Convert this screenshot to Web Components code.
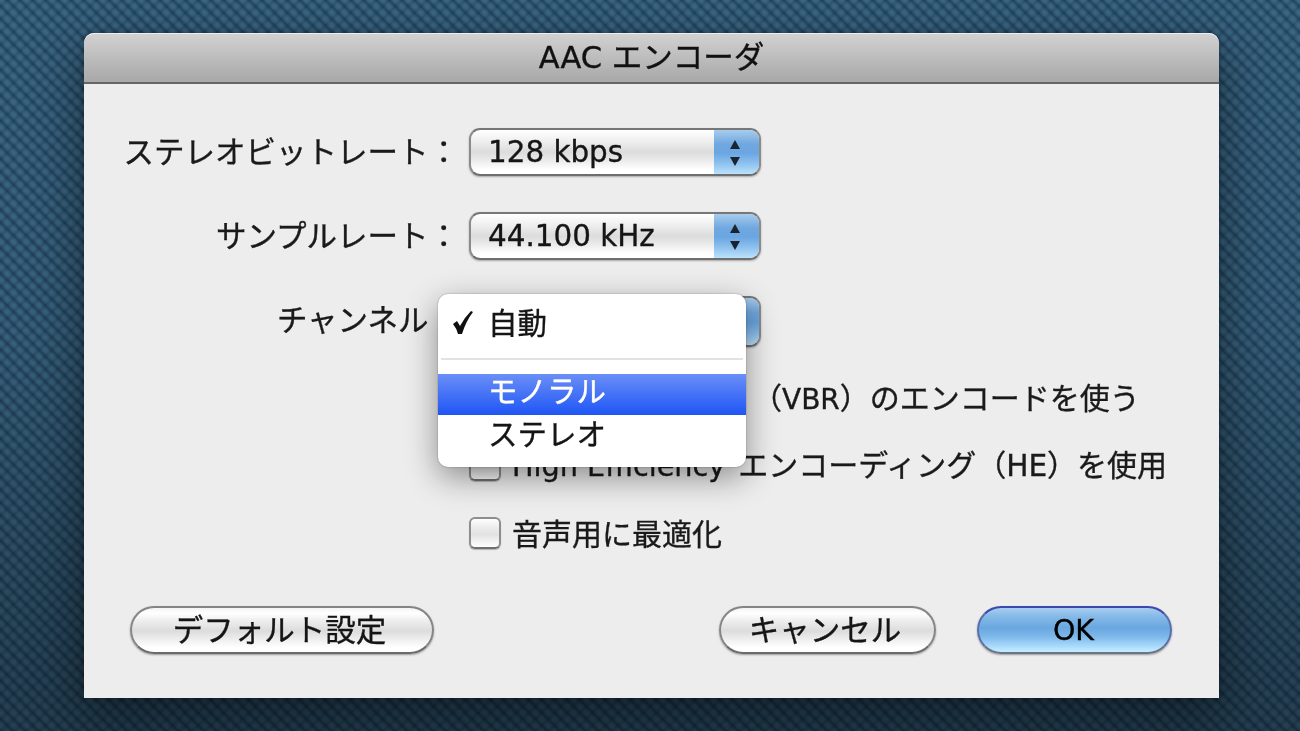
<!DOCTYPE html>
<html lang="ja"><head><meta charset="utf-8"><title>AAC エンコーダ</title>
<style>
html,body{margin:0;padding:0;height:100%;overflow:hidden}
body{font-family:"DejaVu Sans","Noto Sans CJK JP",sans-serif;color:#111}
</style></head><body>
<x-desktop>
 <x-dialog heading="AAC エンコーダ">
  <x-row label="ステレオビットレート："><x-select>128 kbps</x-select></x-row>
  <x-row label="サンプルレート："><x-select>44.100 kHz</x-select></x-row>
  <x-row label="チャンネル：" last>
    <x-select style="height:51px"></x-select>
    <x-menu>
      <x-menu-item checked>自動</x-menu-item>
      <x-menu-sep></x-menu-sep>
      <x-menu-item active>モノラル</x-menu-item>
      <x-menu-item short>ステレオ</x-menu-item>
    </x-menu>
  </x-row>
  <x-check style="margin-top:36px"><x-covered>可変ビットレート</x-covered>（<x-latin size="28">VBR</x-latin>）のエンコードを使う</x-check>
  <x-check style="margin-top:34px"><x-latin size="28.7">High Efficiency</x-latin><x-latin size="28.7" style="display:inline-block;width:13px"></x-latin>エンコーディング（<x-latin size="29.6">HE</x-latin>）を使用</x-check>
  <x-check style="margin-top:36px">音声用に最適化</x-check>
  <x-button slot="footer">デフォルト設定</x-button>
  <x-button slot="footer" style="width:217px;margin-left:auto">キャンセル</x-button>
  <x-button slot="footer" primary style="width:195px;margin-left:41px">OK</x-button>
 </x-dialog>
</x-desktop>
<script>
function def(name, css, html, extra){
  customElements.define(name, class extends HTMLElement{
    constructor(){super();const r=this.attachShadow({mode:'open'});
      r.innerHTML='<style>'+css+'</style>'+html;}
    connectedCallback(){ if(extra) extra.call(this,this.shadowRoot); }
  });
}
def('x-desktop',`
:host{display:block;box-sizing:border-box;width:1300px;height:731px;padding:33px 81px 33px 84px;position:relative;overflow:hidden;
 background-color:#3d6a88;
 background-image:
  linear-gradient(rgba(0,0,0,0) 0,rgba(0,0,0,.06) 45%,rgba(0,0,0,.3) 85%,rgba(0,0,0,.38) 100%),
  repeating-linear-gradient(45deg,rgba(10,32,52,.46) 0,rgba(10,32,52,.1) 2.5px,rgba(10,32,52,0) 4.5px,rgba(10,32,52,.1) 6.5px,rgba(10,32,52,.46) 9px),
  repeating-linear-gradient(-45deg,rgba(10,32,52,.24) 0,rgba(10,32,52,.05) 2.5px,rgba(10,32,52,0) 4.5px,rgba(10,32,52,.05) 6.5px,rgba(10,32,52,.24) 9px);}
`,`<slot></slot>`);
def('x-dialog',`
:host{display:flex;flex-direction:column;height:665px;border-radius:10px 10px 0 0;background:#ededed;
 box-shadow:0 18px 50px 4px rgba(0,0,0,.42),0 0 6px rgba(0,0,0,.3);-webkit-text-stroke-width:.35px}
.inner{flex:1;display:flex;flex-direction:column;filter:blur(.6px)}
header{height:48px;flex:none;border-radius:10px 10px 0 0;border-top:1px solid #eee;border-bottom:2px solid #666;
 background:linear-gradient(#d2d1d1,#a8a8a8);text-align:center;font:400 30.5px/48px "DejaVu Sans","Noto Sans CJK JP",sans-serif;color:#111}
main{flex:1;display:flex;flex-direction:column;padding:44px 0 0 0}
footer{display:flex;padding:0 47px 44px 46px}
`,`<div class="inner"><header></header><main><slot></slot></main><footer><slot name="footer"></slot></footer></div>`,
function(r){r.querySelector('header').textContent=this.getAttribute('heading');});
def('x-row',`
:host{display:grid;grid-template-columns:375px 292px;column-gap:10px;align-items:start;margin-bottom:36px;position:relative}
:host([last]){margin-bottom:0}
.l{grid-column:1;justify-self:end;padding-bottom:2px;font:30.5px/43px "Noto Sans CJK JP",sans-serif;color:#1a1a1a;white-space:nowrap;margin-top:1px}
`,`<div class="l"></div><slot></slot>`,
function(r){r.querySelector('.l').textContent=this.getAttribute('label');});
def('x-select',`
:host{display:flex;box-sizing:border-box;height:48px;width:292px;border-radius:11px;border:2px solid #8b8b8b;border-top-color:#777;border-bottom-color:#6e6e6e;
 overflow:hidden;box-shadow:0 1px 2px rgba(0,0,0,.3);background:linear-gradient(#fff 0,#f4f4f4 18%,#dcdcdc 50%,#e6e6e6 64%,#fff 90%);grid-column:2}
.t{flex:1;padding-left:17px;font:29.4px/44px "DejaVu Sans",sans-serif;color:#151515;white-space:nowrap;min-height:44px}
.a{flex:none;width:45px;box-sizing:border-box;padding-right:4px;display:flex;align-items:center;justify-content:center;margin:-2px 0;border-top:2px solid #3a4fa8;
 background:linear-gradient(#a8ccec 0,#70a8e0 30%,#6aa6e2 50%,#8cc0ee 72%,#c4e8ff 100%)}
`,`<div class="t"><slot></slot></div><div class="a"><svg width="12" height="28" viewBox="0 0 12 28"><path d="M6 1 11 10H1Z" fill="#1a2430"/><path d="M1 18H11L6 27Z" fill="#1a2430"/></svg></div>`);
def('x-menu',`
:host{position:absolute;left:354px;top:-2px;width:308px;height:173px;box-sizing:border-box;padding-top:8px;background:#fff;border-radius:10px;
 box-shadow:0 10px 32px rgba(0,0,0,.42),0 0 2px rgba(0,0,0,.35);z-index:3;display:block;overflow:hidden}
`,`<slot></slot>`);
def('x-menu-item',`
:host{display:flex;align-items:center;box-sizing:border-box;height:42px;padding:0 0 4px 50px;position:relative;font:29.5px "Noto Sans CJK JP",sans-serif;color:#151515;white-space:nowrap}
:host([short]){height:36px;padding-bottom:2px}
:host([active]){background:linear-gradient(#6a8ff7,#1f55f5);color:#fff;height:41px;padding-bottom:11px}
svg{display:none;position:absolute;left:14px;top:8px}
:host([checked]) svg{display:block}
`,`<slot></slot><svg width="22" height="25" viewBox="0 0 22 25"><path d="M1 14 5 11 8 16Q12 8 19 1L21 2Q14 11 10 24H6Q5 19 1 14Z" fill="#111"/></svg>`);
def('x-menu-sep',`
:host{display:block;height:30px;box-sizing:border-box;padding-top:14px}
i{display:block;height:2px;margin:0 3px;background:#e2e2e2}
`,`<i></i>`);
def('x-latin',`:host{display:inline;font-family:"DejaVu Sans",sans-serif}`,`<slot></slot>`,function(){
  this.style.fontSize=this.getAttribute('size')+'px';
});
def('x-covered',`:host{display:inline;visibility:hidden}`,`<slot></slot>`);
def('x-check',`
:host{display:flex;align-items:center;height:32px;margin-left:385px;white-space:nowrap;font:30px/32px "Noto Sans CJK JP",sans-serif;color:#1a1a1a}
i{flex:none;box-sizing:border-box;width:32px;height:32px;border-radius:6px;border:2px solid #8e8e8e;border-bottom-color:#707070;margin-right:11px;
 background:linear-gradient(#fff,#efefef 25%,#e2e2e2 55%,#fff);box-shadow:0 1px 1px rgba(0,0,0,.25)}
span{padding-bottom:2px}
`,`<i></i><span><slot></slot></span>`);
def('x-button',`
:host{display:flex;align-items:center;justify-content:center;box-sizing:border-box;height:48px;width:304px;border-radius:24px;padding:0 5px 5px 0;
 border:2px solid #858585;border-bottom-color:#6b6b6b;box-shadow:0 1px 2px rgba(0,0,0,.35);
 background:linear-gradient(#f4f4f4 0,#fff 12%,#ededed 30%,#dcdcdc 52%,#efefef 72%,#fff 90%);
 font:30.5px "DejaVu Sans","Noto Sans CJK JP",sans-serif;color:#151515;white-space:nowrap}
:host([primary]){border-color:#5a6fa8;border-top-color:#3b48ae;border-bottom-color:#6a7484;padding:0 2px 0 0;
 background:linear-gradient(#a9cdee 0,#86bbe8 18%,#6aa7e0 45%,#7db8ea 65%,#b4e2ff 92%,#c4eeff 100%);color:#000;font-size:28.5px}
`,`<slot></slot>`);
</script>
</body></html>
